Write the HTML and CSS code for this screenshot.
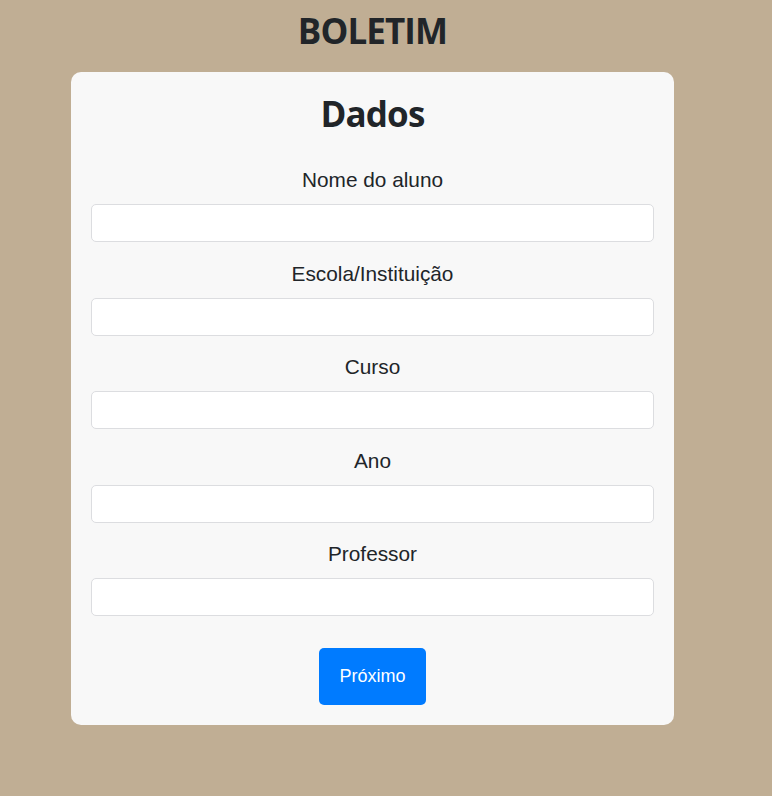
FILE: index.html
```html
<!DOCTYPE html>
<html lang="pt-BR">
<head>
<meta charset="utf-8">
<title>Boletim</title>
<link rel="stylesheet" href="styles.css">
</head>
<body>
<main class="page">
  <h1 class="title">BOLETIM</h1>
  <form class="card">
    <h2 class="card-title">Dados</h2>
    <div class="field">
      <label class="label" for="nome">Nome do aluno</label>
      <input class="input" id="nome" type="text">
    </div>
    <div class="field">
      <label class="label" for="escola">Escola/Instituição</label>
      <input class="input" id="escola" type="text">
    </div>
    <div class="field">
      <label class="label" for="curso">Curso</label>
      <input class="input" id="curso" type="text">
    </div>
    <div class="field">
      <label class="label" for="ano">Ano</label>
      <input class="input" id="ano" type="text">
    </div>
    <div class="field">
      <label class="label" for="prof">Professor</label>
      <input class="input" id="prof" type="text">
    </div>
    <div class="actions">
      <button class="btn" type="button">Próximo</button>
    </div>
  </form>
</main>
</body>
</html>
```
FILE: styles.css
```css
html, body {
  margin: 0;
  padding: 0;
}
body {
  background: #c0ae94;
  color: #212529;
  font-family: "Liberation Sans", Arial, sans-serif;
  min-height: 796px;
}
.page {
  width: 603px;
  margin-left: 71px;
  display: flex;
  flex-direction: column;
}
.title, .card-title {
  font-family: "Open Sans", "Noto Sans", sans-serif;
  font-weight: 700;
  font-size: 35px;
  line-height: 42px;
  letter-spacing: -0.9px;
  text-align: center;
  color: #212529;
  margin: 0;
}
.title {
  margin-top: 10px;
  margin-bottom: 20px;
}
.card {
  background: #f8f8f8;
  border-radius: 10px;
  padding: 21px 20px 20px;
  display: flex;
  flex-direction: column;
}
.card-title {
  margin-bottom: 29px;
}
.field {
  display: flex;
  flex-direction: column;
  margin-bottom: 15.5px;
}
.label {
  font-size: 20.8px;
  line-height: 30px;
  text-align: center;
  padding-top: 1px;
  margin-bottom: 9px;
}
.input {
  box-sizing: border-box;
  height: 38px;
  width: 100%;
  border: 1px solid #dcdde0;
  border-radius: 5px;
  background: #fff;
  margin: 0;
  padding: 6px 12px;
  font-size: 16px;
  font-family: inherit;
}
.actions {
  display: flex;
  justify-content: center;
  margin-top: 16.5px;
}
.btn {
  background: #007bff;
  color: #fff;
  border: none;
  border-radius: 5px;
  font-family: "Liberation Sans", Arial, sans-serif;
  font-size: 18px;
  line-height: 21px;
  padding: 18px 20.5px;
  cursor: pointer;
}
```
